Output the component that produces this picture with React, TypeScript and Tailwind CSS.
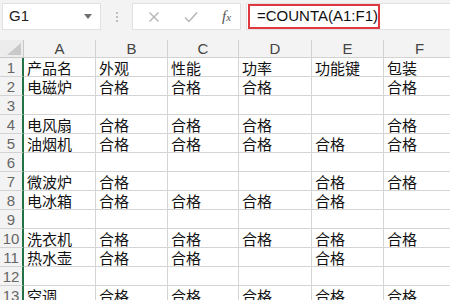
import React from 'react';

const cols = ['A', 'B', 'C', 'D', 'E', 'F'];

const rows: string[][] = [
  ['产品名', '外观', '性能', '功率', '功能键', '包装'],
  ['电磁炉', '合格', '合格', '合格', '', '合格'],
  ['', '', '', '', '', ''],
  ['电风扇', '合格', '合格', '合格', '', '合格'],
  ['油烟机', '合格', '合格', '合格', '合格', '合格'],
  ['', '', '', '', '', ''],
  ['微波炉', '合格', '', '', '合格', '合格'],
  ['电冰箱', '合格', '合格', '合格', '合格', ''],
  ['', '', '', '', '', ''],
  ['洗衣机', '合格', '合格', '合格', '合格', '合格'],
  ['热水壶', '合格', '合格', '', '合格', ''],
  ['', '', '', '', '', ''],
  ['空调', '合格', '合格', '合格', '合格', '合格'],
];

const font = { fontFamily: '"Liberation Sans", "Noto Sans CJK SC", sans-serif' };

export default function App() {
  return (
    <div className="w-[450px] h-[300px] overflow-hidden bg-white" style={font}>
      {/* Formula bar */}
      <div className="h-[40px] bg-[#f3f3f3] flex items-start pt-[3px] pl-[2px]">
        <div className="w-[99px] h-[27px] bg-white border border-[#e1e1e1] flex items-center pl-[6px] pr-[6px]">
          <span className="flex-1 text-[15px] text-[#222]">G1</span>
          <svg width="8" height="5" viewBox="0 0 8 5" className="mr-[2px]">
            <path d="M0 0 L8 0 L4 5 Z" fill="#707070" />
          </svg>
        </div>
        <div className="w-[31px] h-[27px] flex flex-col items-center justify-center gap-[2px]">
          <div className="w-[2px] h-[2px] bg-[#bdbdbd]" />
          <div className="w-[2px] h-[2px] bg-[#bdbdbd]" />
          <div className="w-[2px] h-[2px] bg-[#bdbdbd]" />
        </div>
        <div className="w-[109px] h-[27px] bg-white border border-[#e1e1e1] flex items-center">
          <svg width="12" height="12" viewBox="0 0 12 12" className="ml-[15px]">
            <path d="M1.5 1.5 L10.5 10.5 M10.5 1.5 L1.5 10.5" stroke="#b5b5b5" strokeWidth="1.4" />
          </svg>
          <svg width="14" height="12" viewBox="0 0 14 12" className="ml-[24px]">
            <path d="M1 6.5 L5 10.5 L13 1.5" stroke="#b5b5b5" strokeWidth="1.5" fill="none" />
          </svg>
          <span
            className="ml-[24px] text-[15px] italic text-[#555]"
            style={{ fontFamily: '"Liberation Serif", serif' }}
          >
            f<span className="text-[11px]">x</span>
          </span>
        </div>
        <div className="flex-1 ml-[5px] h-[27px] bg-white border-l border-t border-b border-[#e1e1e1] flex items-center">
          <div className="ml-[1px] w-[132px] h-[25px] border-2 border-[#e0383e] flex items-center pl-[7px]">
            <span className="text-[15px] text-[#111]">=COUNTA(A1:F1)</span>
          </div>
        </div>
      </div>

      {/* Grid */}
      <div className="grid grid-cols-[24px_72px_72px_71px_73px_72px_72px]">
        {/* header row */}
        <div className="h-[18px] bg-[#ececec] border-r border-b border-[#c8c8c8] relative">
          <svg width="14" height="12" viewBox="0 0 14 12" className="absolute right-[2px] bottom-[2px]">
            <path d="M14 0 L14 12 L0 12 Z" fill="#c9c9c9" />
          </svg>
        </div>
        {cols.map((c) => (
          <div
            key={c}
            className="h-[18px] bg-[#f3f3f3] border-r border-b border-[#d2d2d2] flex items-center justify-center text-[15px] text-[#444] leading-[18px]"
          >
            {c}
          </div>
        ))}

        {rows.map((r, i) => (
          <React.Fragment key={i}>
            <div className="h-[19px] bg-[#f3f3f3] border-r-2 border-r-[#217346] border-b border-b-[#d2d2d2] flex items-center justify-center text-[15px] text-[#666] leading-[19px]">
              {i + 1}
            </div>
            {r.map((v, j) => (
              <div
                key={j}
                className="h-[19px] border-r border-b border-[#d4d4d4] pl-[3px] text-[15px] text-[#111] leading-[19px] pt-[1px] whitespace-nowrap overflow-hidden"
              >
                {v}
              </div>
            ))}
          </React.Fragment>
        ))}
      </div>
    </div>
  );
}
